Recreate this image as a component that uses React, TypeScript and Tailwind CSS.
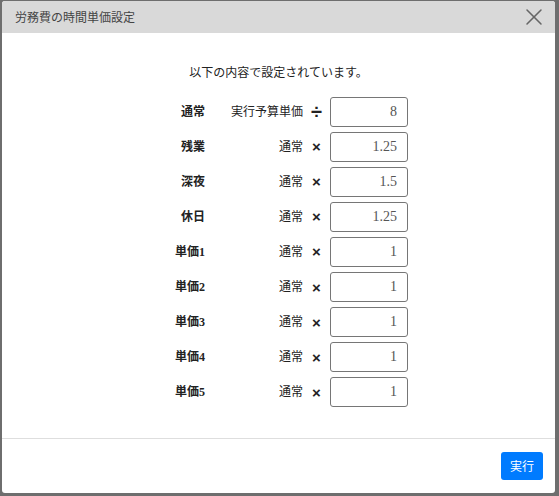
import { X } from "lucide-react";

const rows = [
  { label: "通常", base: "実行予算単価", op: "÷", value: "8" },
  { label: "残業", base: "通常", op: "×", value: "1.25" },
  { label: "深夜", base: "通常", op: "×", value: "1.5" },
  { label: "休日", base: "通常", op: "×", value: "1.25" },
  { label: "単価1", base: "通常", op: "×", value: "1" },
  { label: "単価2", base: "通常", op: "×", value: "1" },
  { label: "単価3", base: "通常", op: "×", value: "1" },
  { label: "単価4", base: "通常", op: "×", value: "1" },
  { label: "単価5", base: "通常", op: "×", value: "1" },
];

export default function App() {
  return (
    <div
      className="h-[496px] w-[559px] bg-[#6e6e6e] pl-[2px] pr-[4px] pt-[1px] pb-[3px]"
      style={{ fontFamily: '"Liberation Serif", "Noto Sans CJK JP", serif' }}
    >
      <div className="flex h-full flex-col overflow-hidden rounded-[3px] bg-white">
        {/* header */}
        <div className="flex h-[32px] items-center justify-between bg-[#d9d9d9] pl-[13px] pr-[7px]">
          <span
            className="text-[12px] text-[#444]"
            style={{ fontFamily: '"Noto Sans CJK JP", sans-serif' }}
          >
            労務費の時間単価設定
          </span>
          <X size={28} strokeWidth={1.3} className="text-[#666]" />
        </div>

        {/* body */}
        <div className="h-[406px] border-b border-[#dedede] pt-[31px]">
          <p className="text-center text-[12px] leading-[18px] text-[#222]">以下の内容で設定されています。</p>
          <div className="ml-[158px] mt-[12px] grid grid-cols-[45px_98px_27px_78px] text-[12px] text-[#222]">
            {rows.map((r) => (
              <div key={r.label} className="contents">
                <div className="flex h-[35.1px] items-center justify-end font-bold">{r.label}</div>
                <div className="flex items-center justify-end">{r.base}</div>
                <div
                  className={
                    r.op === "÷"
                      ? "flex items-center justify-center text-[20px] font-bold leading-none"
                      : "flex items-center justify-center text-[15px] font-bold leading-none"
                  }
                  style={{ fontFamily: '"Liberation Sans", sans-serif' }}
                >
                  {r.op}
                </div>
                <div className="flex items-center">
                  <input
                    readOnly
                    value={r.value}
                    className="h-[30px] w-[78px] rounded-[3px] border border-[#767676] px-[10px] text-right text-[14px] text-[#555] outline-none"
                  />
                </div>
              </div>
            ))}
          </div>
        </div>

        {/* footer */}
        <div className="flex flex-1 items-start justify-end pr-[12px] pt-[13px]">
          <button
            className="h-[28px] rounded-[3px] bg-[#007bff] px-[9px] text-[12px] text-white"
            style={{ fontFamily: '"Noto Sans CJK JP", sans-serif' }}
          >
            実行
          </button>
        </div>
      </div>
    </div>
  );
}
